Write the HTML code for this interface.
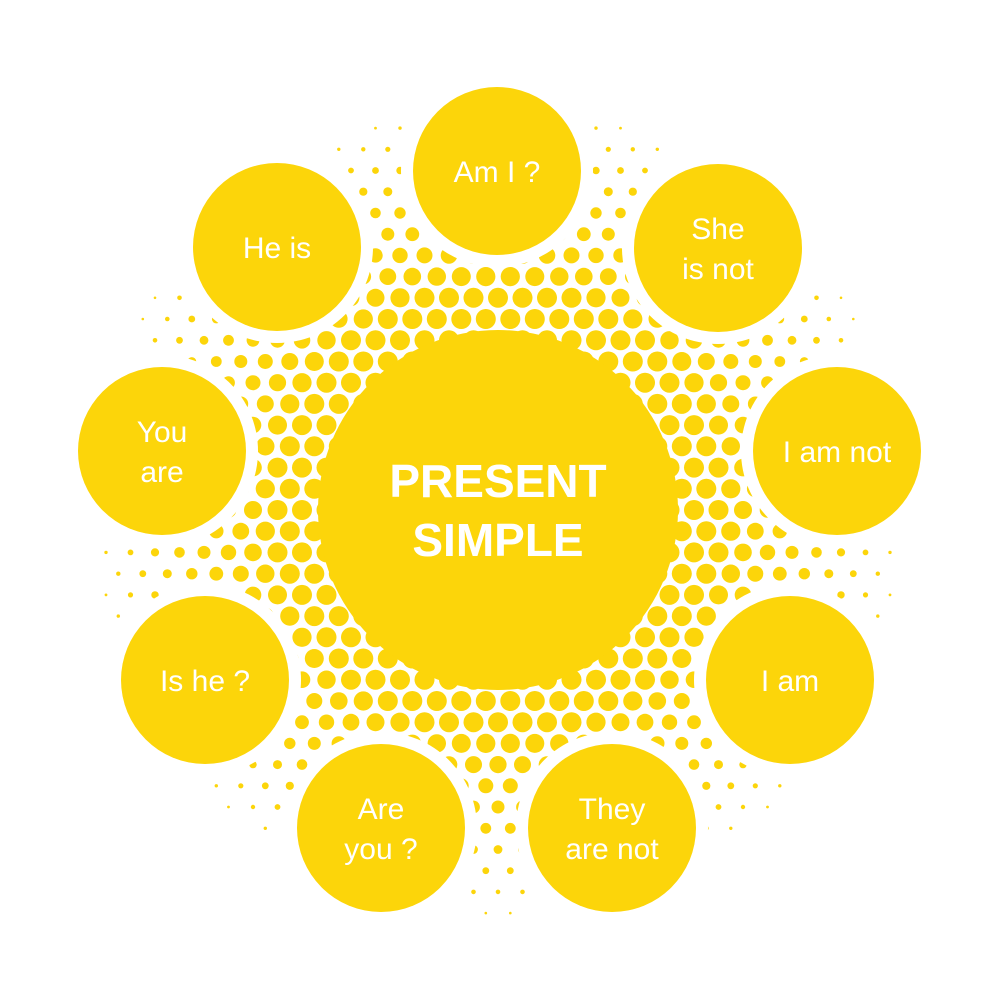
<!DOCTYPE html>
<html><head><meta charset="utf-8"><style>
html,body{margin:0;padding:0;background:#fff;width:1000px;height:1000px;overflow:hidden}
svg text{font-family:"Liberation Sans",sans-serif;fill:#fff;text-anchor:middle}
</style></head><body>
<svg id="s" width="1000" height="1000" viewBox="0 0 1000 1000" xmlns="http://www.w3.org/2000/svg">
<g id="dots" fill="#FCD50A"></g>
<g id="circ"></g>
</svg>
<script>
var cx=498,cy=510,g=document.getElementById('dots'),h='';
var sp=24.5,rowh=sp*0.866;
for(var j=-24;j<=24;j++){for(var i=-24;i<=24;i++){
 var x=cx+i*sp+(j%2?sp/2:0),y=cy+j*rowh;
 var d=Math.hypot(x-cx,y-cy);
 if(d<160)continue;
 var r=d<225?10:10*(430-d)/205;
 if(r<1.3)continue;
 h+='<circle cx="'+x.toFixed(1)+'" cy="'+y.toFixed(1)+'" r="'+r.toFixed(1)+'"/>';
}}
g.innerHTML=h;
var C=[[497,171,'Am I ?'],[277,247,'He is'],[718,248,'She|is not'],[162,451,'You|are'],[837,451,'I am not'],[205,680,'Is he ?'],[790,680,'I am'],[381,828,'Are|you ?'],[612,828,'They|are not']];
var s='<circle cx="498" cy="510" r="180" fill="#FCD50A"/>';
s+='<text x="498" y="497" font-size="46" font-weight="bold">PRESENT</text><text x="498" y="556" font-size="46" font-weight="bold">SIMPLE</text>';
C.forEach(function(c){
 s+='<circle cx="'+c[0]+'" cy="'+c[1]+'" r="96" fill="#fff"/>';
});
C.forEach(function(c){
 s+='<circle cx="'+c[0]+'" cy="'+c[1]+'" r="84" fill="#FCD50A"/>';
 var L=c[2].split('|');
 if(L.length==1)s+='<text x="'+c[0]+'" y="'+(c[1]+11)+'" font-size="30">'+L[0]+'</text>';
 else{s+='<text x="'+c[0]+'" y="'+(c[1]-9)+'" font-size="30">'+L[0]+'</text><text x="'+c[0]+'" y="'+(c[1]+31)+'" font-size="30">'+L[1]+'</text>';}
});
document.getElementById('circ').innerHTML=s;
</script>
</body></html>
